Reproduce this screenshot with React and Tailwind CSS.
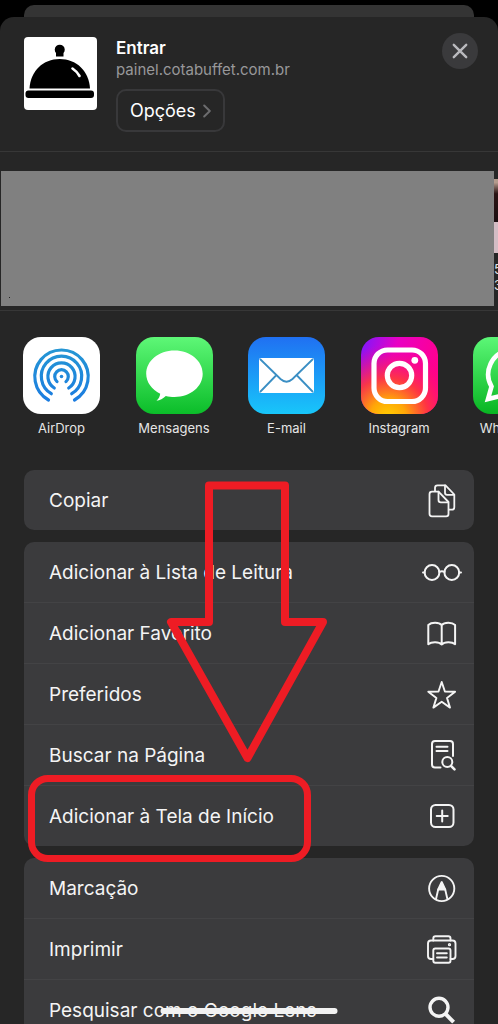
import React from "react";

function RowIcon({ children, width = 2 }) {
  return (
    <svg
      viewBox="0 0 40 40"
      className="size-10 shrink-0"
      fill="none"
      stroke="#f4f4f4"
      strokeWidth={width}
      strokeLinecap="round"
      strokeLinejoin="round"
      aria-hidden="true"
    >
      {children}
    </svg>
  );
}

const CopyIcon = () => (
  <RowIcon width={1.8}>
    <path d="M10 11.7h6.5l10 10.3v12q0 2.3-2.3 2.3H10q-2.5 0-2.5-2.5V14.2q0-2.5 2.5-2.5z" />
    <path d="M16.5 11.7v8.3q0 2.3 2.3 2.3h7.5" />
    <path d="M13 11V7.8q0-2.5 2.5-2.5h8l8.8 9.2v12.7q0 2.5-2.5 2.5h-3" />
    <path d="M23 5.3v7.5q0 2 2 2h7" />
  </RowIcon>
);

const GlassesIcon = () => (
  <RowIcon>
    <circle cx="10" cy="20.5" r="7.4" />
    <circle cx="29.8" cy="20.5" r="7.4" />
    <path d="M17.2 19.8q2.7-1.3 5.4 0M1 20.5h1.6M37.2 20.5h1.8" />
  </RowIcon>
);

const BookIcon = () => (
  <RowIcon>
    <path d="M19.7 12.2C17 9 9.5 9 6.300 12V31.2C9.500 28.6 17 28.6 19.7 31.5C22.4 28.6 30 28.6 33.1 31.2V12C30 9 22.4 9 19.7 12.2V31.5" />
  </RowIcon>
);

const StarIcon = () => (
  <RowIcon width={1.9}>
    <path d="M19.7 8l3.2 9.500 10.2.2-8.100 6.2 3 9.7-8.3-5.8-8.3 5.8 3-9.7-8.100-6.2 10.2-.2z" />
  </RowIcon>
);

const FindIcon = () => (
  <RowIcon>
    <path d="M18.5 32.5H13q-3 0-3-3V9q0-3 3-3h15q3 0 3 3v12" />
    <path d="M14.5 11.7h11M14.5 16h11" />
    <circle cx="25.3" cy="27" r="5" />
    <path d="M29 30.8l3.5 3.500" strokeWidth="2.600" />
  </RowIcon>
);

const PlusIcon = () => (
  <RowIcon>
    <rect x="9" y="9" width="22.5" height="22" rx="4.5" />
    <path d="M20.2 14.5v11M14.7 20h11" />
  </RowIcon>
);

const MarkupIcon = () => (
  <RowIcon width={1.9}>
    <circle cx="19.7" cy="20.5" r="12.6" />
    <path d="M19.7 14l-3.500 7.500 7 0z" fill="#f4f4f4" />
    <path d="M16.2 21.5l-2.2 9.500M23.2 21.5l2.2 9.500" />
  </RowIcon>
);

const PrinterIcon = () => (
  <RowIcon width={1.9}>
    <path d="M11.3 30H9q-3 0-3-3V14.5q0-3 3-3h21.5q3 0 3 3V27q0 3-3 3h-2" />
    <path d="M11.3 11.5V9.5q0-2.2 2.2-2.2h12.8q2.2 0 2.2 2.2v2" />
    <rect x="11.3" y="19.5" width="17.2" height="14.3" rx="2" />
    <path d="M15 24.3h9.8M15 28.5h9.8" />
    <circle cx="27.5" cy="15.7" r="0.7" />
  </RowIcon>
);

const SearchIcon = () => (
  <RowIcon width={3.4}>
    <circle cx="17" cy="17.3" r="9" />
    <path d="M23.8 24.2l7.8 8" strokeWidth="4" strokeLinecap="butt" />
  </RowIcon>
);

const groups = [
  [["Copiar", CopyIcon]],
  [
    ["Adicionar à Lista de Leitura", GlassesIcon],
    ["Adicionar Favorito", BookIcon],
    ["Preferidos", StarIcon],
    ["Buscar na Página", FindIcon],
    ["Adicionar à Tela de Início", PlusIcon],
  ],
  [
    ["Marcação", MarkupIcon],
    ["Imprimir", PrinterIcon],
    ["Pesquisar com o Google Lens", SearchIcon],
  ],
];

const AirDrop = () => (
  <svg viewBox="0 0 77 77" className="size-full" fill="none" stroke="url(#air)" strokeWidth="3.2" strokeLinecap="round">
    <defs>
      <linearGradient id="air" gradientUnits="userSpaceOnUse" x1="0" y1="12" x2="0" y2="64">
        <stop stopColor="#2596d4" />
        <stop offset="1" stopColor="#1b7ce0" />
      </linearGradient>
    </defs>
    <rect width="77" height="77" fill="#fff" stroke="none" />
    <path d="M25.5 63A26.7 26.7 0 1 1 51.5 63" />
    <path d="M28.3 56.7A20.2 20.2 0 1 1 48.7 56.7" />
    <path d="M31.3 51A13.6 13.6 0 1 1 45.7 51" />
    <path d="M34 44.6A6.8 6.8 0 1 1 43 44.6" />
    <circle cx="38.5" cy="39.5" r="1.8" fill="#2388db" stroke="none" />
  </svg>
);

const Messages = () => (
  <svg viewBox="0 0 77 77" className="size-full">
    <defs>
      <linearGradient id="msg" x2="0" y2="1">
        <stop stopColor="#5ef777" />
        <stop offset="1" stopColor="#0bbd29" />
      </linearGradient>
    </defs>
    <rect width="77" height="77" fill="url(#msg)" />
    <path
      fill="#fff"
      d="M38.5 13.5c15.7 0 28.2 10.2 28.2 23.3S54.2 60 38.5 60c-3.100 0-6-.3-8.700-1.100-2.700 2.500-5.900 4.500-9.300 4.900 2-2 3.400-4.200 3.700-7.100-8.400-4.100-14-11.500-14-19.900 0-13.100 12.600-23.300 28.300-23.300z"
    />
  </svg>
);

const Mail = () => (
  <svg viewBox="0 0 77 77" className="size-full">
    <defs>
      <linearGradient id="mail" x2="0" y2="1">
        <stop stopColor="#2070f2" />
        <stop offset="1" stopColor="#18c6fa" />
      </linearGradient>
    </defs>
    <rect width="77" height="77" fill="url(#mail)" />
    <rect x="11" y="21" width="55" height="35" rx="2" fill="#fff" />
    <path
      d="M12 22l20.500 20q6 5.500 12 0L65 22M12 55l16.500-17M65 55L48.500 38"
      fill="none"
      stroke="#3b8fc4"
      strokeWidth="1.8"
    />
  </svg>
);

const Instagram = () => (
  <svg viewBox="0 0 77 77" className="size-full">
    <defs>
      <linearGradient id="ig" x1="0" y1="0" x2="1" y2="0.3">
        <stop stopColor="#7a18ff" />
        <stop offset="0.45" stopColor="#e800c4" />
        <stop offset="1" stopColor="#ff0090" />
      </linearGradient>
      <radialGradient id="ig2" cx="0.35" cy="1.05" r="0.95">
        <stop stopColor="#ffd000" />
        <stop offset="0.25" stopColor="#ffa608" />
        <stop offset="0.55" stopColor="#ff3a3a" stopOpacity="0.9" />
        <stop offset="1" stopColor="#ff0080" stopOpacity="0" />
      </radialGradient>
    </defs>
    <rect width="77" height="77" fill="url(#ig)" />
    <rect width="77" height="77" fill="url(#ig2)" />
    <g fill="none" stroke="#fff" strokeWidth="5.2">
      <rect x="13" y="13" width="51.5" height="51.5" rx="13.5" />
      <circle cx="38.5" cy="38.5" r="12.2" />
    </g>
    <circle cx="53.8" cy="23.3" r="3.4" fill="#fff" />
  </svg>
);

const WhatsApp = () => (
  <svg viewBox="0 0 77 77" className="size-full">
    <defs>
      <linearGradient id="wa" x2="0" y2="1">
        <stop stopColor="#5cf777" />
        <stop offset="1" stopColor="#08b522" />
      </linearGradient>
    </defs>
    <rect width="77" height="77" fill="url(#wa)" />
    <path
      fill="none"
      stroke="#fff"
      strokeWidth="4.6"
      d="M15 62l3.500-12.500A24.500 24.500 0 1 1 28 58.800z"
    />
    <path fill="#fff" d="M30 25c3-2 5 0 7 6-3 4-1 8 7 12 4-4 5-4 10 0 0 6-6 9-12 7-9-3-18-14-12-25z" />
  </svg>
);

const apps = [
  ["AirDrop", AirDrop],
  ["Mensagens", Messages],
  ["E-mail", Mail],
  ["Instagram", Instagram],
  ["WhatsApp", WhatsApp],
];

function Header() {
  return (
    <header className="flex h-[135px] items-start border-b border-[#373737] pt-5 pr-5 pl-6">
      <svg viewBox="0 0 73 73" className="size-[73px] shrink-0 rounded-[4px] bg-white" role="img" aria-label="Cota Buffet">
        <path d="M32 19.5v-3.500a5 5 0 1 1 7.500 0v3.500z" />
        <path d="M5.500 51.500C6.500 34 19 22 35.700 22S65 34 66 51.500z" />
        <rect x="1.5" y="53.5" width="68.5" height="7.5" rx="3" />
        <path d="M48.500 31.500q4.500 3 7 7.500" stroke="#fff" strokeWidth="2.6" strokeLinecap="round" fill="none" />
      </svg>
      <div className="ml-[19px] flex min-w-0 flex-1 flex-col items-start">
        <h1 className="text-[17px] leading-[22px] font-semibold text-white">Entrar</h1>
        <p className="text-[15px] leading-[22px] text-[#98989a]">painel.cotabuffet.com.br</p>
        <button
          type="button"
          className="mt-2 flex h-[43px] items-center gap-[7px] rounded-[10px] border-2 border-[#38383a] px-3 text-[18px] text-white"
        >
          Opções
          <svg viewBox="0 0 8 14" className="h-3.5 w-2" fill="none" stroke="#6c6c6e" strokeWidth="2" strokeLinecap="round" strokeLinejoin="round" aria-hidden="true">
            <path d="M1.200 1.500L6.800 7l-5.600 5.500" />
          </svg>
        </button>
      </div>
      <button
        type="button"
        aria-label="Fechar"
        className="-mt-1 flex size-9 items-center justify-center rounded-full bg-[#3a3a3c]"
      >
        <svg viewBox="0 0 16 16" className="size-4" stroke="#b9b9bd" strokeWidth="2.4" strokeLinecap="round" aria-hidden="true">
          <path d="M1.800 1.800l12.400 12.400M14.200 1.800L1.800 14.200" />
        </svg>
      </button>
    </header>
  );
}

function Contacts() {
  return (
    <section className="flex h-[159px] border-b border-[#373737] pt-[19px] pb-1 pl-px">
      <div className="flex flex-1 items-end bg-[#808080] pb-2 pl-2">
        <span className="size-px bg-[#222]" />
      </div>
      <div className="w-1 overflow-hidden pt-2 text-[13px] leading-4 text-[#e5e5e5]">
        <div className="h-[74px] bg-linear-to-b from-[#b39a8c] from-5% via-[#2a1414] via-20% to-[#1c0e10] to-55%">
          <div className="h-[43px]" />
          <div className="h-[31px] bg-[#d3bcc4]" />
        </div>
        <p className="mt-2">5</p>
        <p>3</p>
      </div>
    </section>
  );
}

function Apps() {
  return (
    <nav className="-mr-[52px] flex justify-between pt-[26px] pl-[23px]">
      {apps.map(([name, Icon]) => (
        <a key={name} href="#" className="flex w-[77px] flex-col items-center">
          <span className="size-[77px] overflow-hidden rounded-[18px]">
            <Icon />
          </span>
          <span className="mt-[5px] text-[13px] leading-[18px] text-[#e5e5e5]">{name}</span>
        </a>
      ))}
    </nav>
  );
}

function Actions() {
  return (
    <main className="relative mx-6 mt-[33px] flex flex-col gap-3">
      {groups.map((rows) => (
        <ul key={rows[0][0]} className="divide-y divide-[#434345] overflow-hidden rounded-[10px] bg-[#3b3b3d]">
          {rows.map(([label, Icon]) => (
            <li key={label}>
              <button type="button" className="flex h-[60px] w-full items-center justify-between pr-3 pl-[25px] text-left text-[19px] text-[#f4f4f4]">
                <span className="pt-0.5">{label}</span>
                <Icon />
              </button>
            </li>
          ))}
        </ul>
      ))}
      <svg viewBox="0 0 170 290" className="pointer-events-none absolute top-2 left-[139px] h-[290px] w-[170px]" fill="none" stroke="#ee1c24" strokeWidth="8" strokeLinejoin="round" aria-hidden="true">
        <path d="M46 7.500H122V144H160L84.500 280 8 144H46z" />
      </svg>
      <div className="pointer-events-none absolute top-[305px] left-1 h-[87px] w-[283px] rounded-[20px] border-[7px] border-[#ee1c24]" />
    </main>
  );
}

export default function App() {
  return (
    <div className="relative flex h-screen flex-col overflow-hidden bg-black pt-[5px] font-[Inter,'Liberation_Sans',sans-serif]">
      <div className="mx-6 h-3 shrink-0 rounded-t-[10px] bg-[#343434]" />
      <div className="flex-1 overflow-hidden rounded-t-[14px] bg-[#262626]">
        <Header />
        <Contacts />
        <Apps />
        <Actions />
      </div>
      <div className="absolute bottom-2.5 left-1/2 h-1.5 w-[177px] -translate-x-1/2 rounded-full bg-[#f2f2f2]" />
    </div>
  );
}
